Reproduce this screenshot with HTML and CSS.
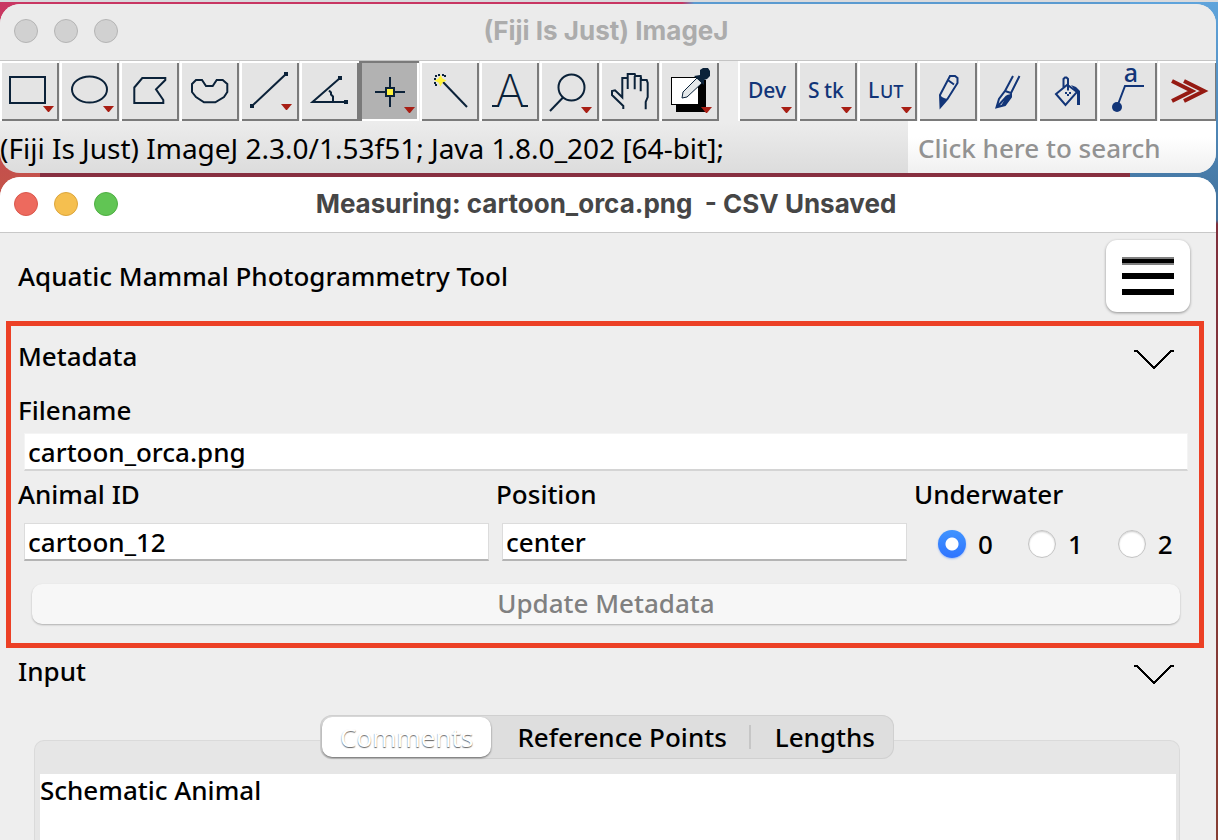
FILE: index.html
```
<!DOCTYPE html>
<html lang="en">
<head>
<meta charset="utf-8">
<title>Aquatic Mammal Photogrammetry Tool</title>
<link rel="stylesheet" href="styles.css">
</head>
<body>
<section class="window launcher">
  <header class="titlebar">
    <div class="lights"><span class="light"></span><span class="light"></span><span class="light"></span></div>
    <h1 class="title">(Fiji Is Just) ImageJ</h1>
  </header>
  <div class="toolbar">
    <button class="tool" aria-label="Rectangle"><svg viewBox="0 0 58 60"><rect x="9" y="16" width="35" height="26"/><path class="more" d="M42 45h11l-5 6h-1z"/></svg></button>
    <button class="tool" aria-label="Oval"><svg viewBox="0 0 58 60"><ellipse cx="28.500" cy="28.500" rx="17.500" ry="13"/><path class="more" d="M42 45h11l-5 6h-1z"/></svg></button>
    <button class="tool" aria-label="Polygon"><svg viewBox="0 0 58 60"><path d="M13.300 26.500L21.300 17h23v2L35 28.300 42.300 39v3h-29z"/></svg></button>
    <button class="tool" aria-label="Freehand"><svg viewBox="0 0 58 60"><path d="M11 23l4-4h6l4 6h6.700l4-6h6l4.600 4v8L43 36l-8.700 5.300H23L15 36l-4-5z"/></svg></button>
    <button class="tool" aria-label="Line"><svg viewBox="0 0 58 60"><path d="M11 45L45 13"/><path class="solid" d="M9 43h4v4H9zM43 11h4v4h-4z"/><path class="more" d="M40 43h11l-5 6h-1z"/></svg></button>
    <button class="tool" aria-label="Angle"><svg viewBox="0 0 58 60"><path d="M39 17L11.500 41H45M28 29.500l2 2v2l2 2V41"/><path class="solid" d="M37 15h4v4h-4zM43 39h4v4h-4z"/></svg></button>
    <button class="tool pressed" aria-label="Point" aria-pressed="true"><svg viewBox="0 0 58 60"><path d="M14 31h30M29 16v30"/><rect class="yellow" x="25" y="27" width="8" height="8"/><path class="more" d="M43 46h11l-5 6h-1z"/></svg></button>
    <button class="tool" aria-label="Wand"><svg viewBox="0 0 58 60"><path d="M22 21l24 25"/><path class="solid" d="M14 14h2v2h-2zM23 14h2v2h-2zM14 23h2v2h-2zM17 13h2v2h-2zM21 13h2v2h-2zM13 17h2v2h-2zM13 21h2v2h-2z"/><path class="yellow-fill" d="M19.500 14l2 3.500 4 2-4 2-2 4-2-4-4-2 4-2z"/></svg></button>
    <button class="tool" aria-label="Text"><svg viewBox="0 0 58 60"><text class="type" x="29" y="46" text-anchor="middle">A</text><path d="M11 45h7M40 45h7"/></svg></button>
    <button class="tool" aria-label="Magnifier"><svg viewBox="0 0 58 60"><circle cx="30.500" cy="26.500" r="13"/><path d="M22 36.500L9 50"/><path class="more" d="M40 46h11l-5 6h-1z"/></svg></button>
    <button class="tool" aria-label="Hand"><svg viewBox="0 0 58 60"><path d="M22.300 48v-3L11 34v-4l3-.700 7.300 7V17h5.400v-4h7l.600 2h5.400l.600 4h5.400l1 3v14l-2 5v7.300M26.700 17v11M33.700 15v13.300M39.700 17v13.300"/></svg></button>
    <button class="tool" aria-label="Color picker"><svg viewBox="0 0 58 60"><path class="black" d="M15 19h30v32H15z"/><rect class="paper" x="10.500" y="16.500" width="27" height="27"/><path class="dropper" d="M36 17l5 5-15 14-5 1 1-6z"/><path class="solid" d="M33 15l6-1V9l3-2h5l2 3v5l-3 3-3 1v5z"/><path class="more" d="M40 46h11l-5 6h-1z"/></svg></button>
    <button class="tool blue second-group" aria-label="Developer menu"><svg viewBox="0 0 58 60"><text x="9" y="37" class="menu">Dev</text><path class="more" d="M42 46h11l-5 6h-1z"/></svg></button>
    <button class="tool blue" aria-label="Stacks menu"><svg viewBox="0 0 58 60"><text x="9" y="37" class="menu">S<tspan x="25">tk</tspan></text><path class="more" d="M42 46h11l-5 6h-1z"/></svg></button>
    <button class="tool blue" aria-label="Lookup tables"><svg viewBox="0 0 58 60"><text x="9" y="37" class="menu">L<tspan class="small" x="21">UT</tspan></text><path class="more" d="M42 46h11l-5 6h-1z"/></svg></button>
    <button class="tool blue" aria-label="Pencil"><svg viewBox="0 0 58 60"><path d="M31 15h5l2.500 2v5L28.500 38l-7 8-.500-12zM29.500 19.500l5.500 4"/><path class="solid" d="M21 34l2 2 2 1 3 1-7 8z"/></svg></button>
    <button class="tool blue" aria-label="Brush"><svg viewBox="0 0 58 60"><path d="M34 15l-8 15M40.500 15L32 32M26 30l6 2v4l-6 8-8.500 2.300L20 38zM18 46l10-11"/><path class="solid" d="M28 34l4-1v4l-6 7-4 1z"/></svg></button>
    <button class="tool blue" aria-label="Flood fill"><svg viewBox="0 0 58 60"><path d="M17 33l11.300-9.300L38 31 26.500 44zM24.500 27v-9l1.500-1.500h1.500L29 18v11.500"/><path class="solid" d="M32 24l5 2 4 4v14h-3V32zM26 31h2v2h-2zM30 31h2v2h-2zM28 33h2v2h-2z"/></svg></button>
    <button class="tool blue" aria-label="Label"><svg viewBox="0 0 58 60"><path d="M18 46l8-21h19"/><circle class="solid" cx="18" cy="46" r="5"/><text class="letter" x="32" y="21" text-anchor="middle">a</text></svg></button>
    <button class="tool red" aria-label="More tools"><svg viewBox="0 0 58 60"><path d="M13 20l20 10-20 10M25 20l20 10-20 10"/></svg></button>
  </div>
  <div class="status">
    <p class="version">(Fiji Is Just) ImageJ 2.3.0/1.53f51; Java 1.8.0_202 [64-bit];</p>
    <input class="search" type="search" placeholder="Click here to search" aria-label="Search">
  </div>
</section>

<main class="window tool-window">
  <header class="titlebar active">
    <div class="lights"><span class="light close"></span><span class="light minimize"></span><span class="light zoom"></span></div>
    <h2 class="title">Measuring: cartoon_orca.png &nbsp;- CSV Unsaved</h2>
  </header>
  <div class="app-head">
    <p>Aquatic Mammal Photogrammetry Tool</p>
    <button class="menu-button" aria-label="Menu"><svg viewBox="0 0 52 40"><path class="edge" d="M0 1h52v8H0z"/><path d="M0 3h52v4H0zM0 17h52v6H0zM0 33h52v6H0z"/></svg></button>
  </div>
  <form class="metadata">
    <div class="section-head">
      <h3>Metadata</h3>
      <button type="button" class="chevron" aria-label="Toggle metadata"><svg viewBox="0 0 40 20"><path d="M0 1h3L20 18 37 1h3"/></svg></button>
    </div>
    <label class="field filename" for="filename">Filename</label>
    <input class="box pale" id="filename" value="cartoon_orca.png">
    <div class="columns">
      <div class="column">
        <label class="field" for="animal">Animal ID</label>
        <input class="box" id="animal" value="cartoon_12">
      </div>
      <div class="column">
        <label class="field" for="position">Position</label>
        <input class="box" id="position" value="center">
      </div>
      <fieldset class="column">
        <legend class="field">Underwater</legend>
        <div class="radios">
          <label><input type="radio" name="underwater" checked>0</label>
          <label><input type="radio" name="underwater">1</label>
          <label><input type="radio" name="underwater">2</label>
        </div>
      </fieldset>
    </div>
    <button type="button" class="update" disabled>Update Metadata</button>
  </form>
  <section class="input-section">
    <div class="section-head">
      <h3>Input</h3>
      <button type="button" class="chevron" aria-label="Toggle input"><svg viewBox="0 0 40 20"><path d="M0 1h3L20 18 37 1h3"/></svg></button>
    </div>
    <div class="tabs" role="tablist">
      <button role="tab" aria-selected="true" class="tab selected">Comments</button>
      <button role="tab" aria-selected="false" class="tab">Reference Points</button>
      <span class="divider"></span>
      <button role="tab" aria-selected="false" class="tab">Lengths</button>
    </div>
    <div class="panel">
      <textarea aria-label="Comments">Schematic Animal</textarea>
    </div>
  </section>
</main>
</body>
</html>
```
FILE: styles.css
```
* { box-sizing: border-box; }

body {
  margin: 0;
  height: 100vh;
  padding-top: 2px;
  border-top: 2px solid #d9dadd;
  display: flex;
  flex-direction: column;
  gap: 4px;
  overflow: hidden;
  font: 500 26px/32px "Noto Sans", "Open Sans", sans-serif;
  color: #000;
  background:
    linear-gradient(#5fa4dc, #42719b 220px, #7f2f3c 224px, #873e33) right / 88px 100% no-repeat,
    linear-gradient(90deg, transparent 56%, #5a9ad0 57%) top / 100% 8px no-repeat,
    linear-gradient(#c93663, #c4524a 180px, #7f2f3c) left / 40px 100% no-repeat,
    linear-gradient(#c93663, #872f40 160px);
}

h1, h2, h3, p, fieldset { margin: 0; padding: 0; border: 0; font-weight: 500; }
h3 { font-size: 26px; }
button, input, textarea { font: inherit; color: inherit; }
button { padding: 0; border: 0; background: none; }

.window { margin-right: 2px; overflow: hidden; }
.launcher {
  flex: none;
  border-radius: 20px;
  background: linear-gradient(#ececec 70%, #dcdcdc);
}

.titlebar {
  display: grid;
  grid-template-columns: 1fr auto 1fr;
  align-items: center;
  height: 57px;
  padding: 0 18px 2px 14px;
  border-bottom: 1px solid #c4c4c4;
  background: #ebebeb;
}
.titlebar.active { background: #fff; border-color: #c8c8c8; }
.title { font: 700 26px/32px Inter, sans-serif; color: #acacac; white-space: pre; }
.active .title { color: #464646; }
.lights { display: flex; gap: 16px; }
.light {
  width: 24px;
  height: 24px;
  border: 1px solid #b4b4b4;
  border-radius: 50%;
  background: #d1d1d1;
}
.close { background: #ed6a5e; border-color: #d9574c; }
.minimize { background: #f5bf4f; border-color: #dba53c; }
.zoom { background: #61c554; border-color: #4fae43; }

.toolbar { display: flex; gap: 2px; padding-left: 1px; background: #ececec; }
.tool {
  flex: none;
  width: 58px;
  height: 60px;
  background: #e4e4e4;
  box-shadow: inset 1px 2px #fff, inset -2px -2px #7a7a7a, -1px 0 #fff;
}
.second-group { margin-left: 18px; }
.tool svg { display: block; overflow: visible; fill: none; stroke: #0b2239; stroke-width: 2; }
.tool.pressed { background: #b2b2b2; box-shadow: inset 1px 2px #7a7a7a, inset -2px -2px #fff, -2px 0 #7a7a7a; }
.blue svg { stroke: #123578; }
.red svg { stroke: #951a12; stroke-width: 4; }
.tool .more { fill: #a81e14; stroke: none; }
.tool .solid { fill: #0b2239; stroke: none; }
.blue .solid { fill: #123578; }
.tool .yellow { fill: #fff33c; }
.tool .yellow-fill { fill: #fff33c; stroke: none; }
.tool .black { fill: #000; stroke: none; }
.tool .paper { fill: #fff; stroke: #000; stroke-width: 1; }
.tool .dropper { fill: #e4e8ea; stroke-width: 1; }
.tool text { fill: #123578; stroke: none; }
.tool .menu { font-size: 21px; }
.tool .small { font-size: 18px; }
.tool .letter { font: 500 25px "Noto Sans", sans-serif; }
.tool .type { fill: #0b2239; font: 200 45px Inter, sans-serif; }

.status { display: flex; height: 52px; }
.version { flex: 1; padding-top: 11px; font-size: 28px; font-weight: 400; white-space: nowrap; }
.search {
  width: 308px;
  padding: 2px 10px 0;
  border: 0;
  outline: 0;
  appearance: none;
  background: linear-gradient(#fff 30%, #f0f0f0);
}
.search::placeholder { color: #929292; opacity: 1; }

.tool-window {
  flex: 1;
  display: flex;
  flex-direction: column;
  border-radius: 20px 20px 0 0;
  background: #eee;
}
.titlebar.active { flex: none; height: 56px; }
.app-head {
  display: flex;
  align-items: center;
  justify-content: space-between;
  height: 88px;
  padding: 0 26px 2px 18px;
}
.menu-button {
  display: grid;
  place-items: center;
  width: 84px;
  height: 72px;
  border-radius: 11px;
  background: #fff;
  box-shadow: 0 1px 3px #0006;
}
.menu-button svg { width: 52px; height: 40px; }
.menu-button .edge { fill: #808080; }

.metadata {
  display: flex;
  flex-direction: column;
  margin: 0 12px 0 6px;
  padding: 14px 7px 19px;
  border: 5px solid #ec4025;
}
.section-head { display: flex; align-items: center; justify-content: space-between; }
.metadata .section-head { padding-right: 18px; }
.chevron { height: 32px; padding-top: 8px; }
.chevron svg { display: block; width: 40px; height: 20px; fill: none; stroke: #000; stroke-width: 2; shape-rendering: crispEdges; }
.field { display: block; padding: 0; line-height: 32px; }
.filename { margin-top: 22px; }
.box {
  display: block;
  height: 38px;
  padding: 0 3px;
  border: 1px solid #dcdcdc;
  border-bottom: 2px solid #b4b4b4;
  outline: 0;
  background: #fff;
}
.box.pale { margin: 7px 4px 0 6px; border-color: #f4f4f4; border-bottom-color: #d4d4d4; }
.columns { display: grid; grid-template-columns: 478fr 418fr 278fr; margin-top: 7px; }
.column { min-width: 0; }
.column .box { width: calc(100% - 13px); margin: 13px 7px 0 6px; }
.radios { display: flex; gap: 35px; margin-top: 18px; padding-left: 24px; }
.radios label { display: flex; gap: 12px; align-items: center; }
.radios input {
  appearance: none;
  width: 28px;
  height: 28px;
  margin: 0;
  border: 1px solid #c4c4c4;
  border-radius: 50%;
  background: #fff;
  box-shadow: inset 0 1px 2px #0003;
}
.radios input:checked {
  border: 0;
  background: radial-gradient(circle, #fff 6px, transparent 7px), linear-gradient(#4094ff, #2f74ff);
  box-shadow: 0 1px 2px #2f74ff66;
}
.update {
  height: 40px;
  margin: 23px 12px 0 14px;
  padding-bottom: 2px;
  border-radius: 10px;
  background: #f7f7f7;
  box-shadow: 0 1px 2px #0004;
  color: #808080;
}

.input-section { flex: 1; display: flex; flex-direction: column; padding: 7px 36px 0 34px; }
.input-section .section-head { margin-left: -16px; padding-right: 6px; }
.tabs {
  position: relative;
  align-self: center;
  display: flex;
  align-items: center;
  height: 44px;
  margin-top: 28px;
  padding: 2px;
  border-radius: 12px;
  background: #dedede;
  box-shadow: inset 0 0 0 1px #d0d0d0;
}
.tab { height: 40px; padding: 0 18px; }
.tab:nth-child(2) { padding: 0 22px 0 26px; }
.tab:last-child { padding: 0 17px 0 24px; }
.tab.selected {
  border-radius: 10px;
  background: #fff;
  box-shadow: 0 1px 2px #0008;
  color: #fff;
  font-weight: 400;
  text-shadow: 0 1px 1px #666;
}
.divider { width: 2px; height: 24px; background: #c6c6c6; }
.panel {
  flex: 1;
  display: flex;
  margin-top: -19px;
  padding: 33px 3px 0 5px;
  border: 1px solid #dadada;
  border-bottom: 0;
  border-radius: 10px 10px 0 0;
  background: #e6e6e6;
}
textarea { flex: 1; padding: 0; border: 0; outline: 0; resize: none; background: #fff; }
```
